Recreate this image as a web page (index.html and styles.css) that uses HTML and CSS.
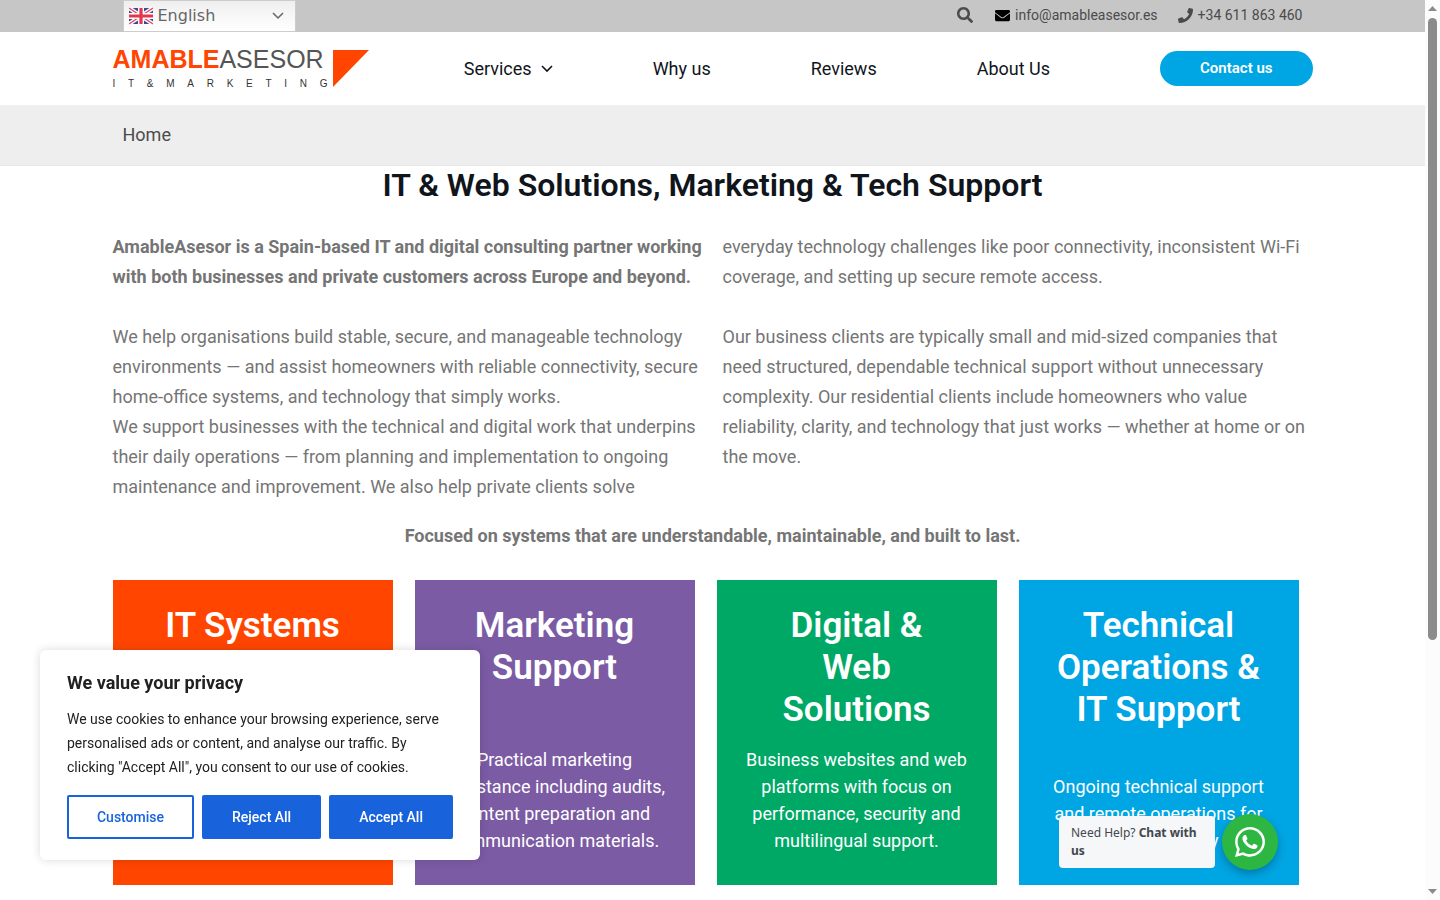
FILE: index.html
```
<!DOCTYPE html>
<html lang="en">
<head>
	<meta charset="utf-8">
	<title>AmableAsesor - IT &amp; Marketing</title>
	<link rel="stylesheet" href="styles.css">
</head>

<body>
<div class="page">

	<div class="topbar">
		<div class="container topbar-row">
			<div class="language">
				<svg class="flag" viewBox="0 0 24 18" width="24" height="18" aria-hidden="true">
					<rect y="1" width="24" height="16" fill="#3c4a93"/>
					<path d="M0 1l24 16M24 1L0 17" stroke="#fff" stroke-width="4"/>
					<path d="M0 1l24 16M24 1L0 17" stroke="#e4455c" stroke-width="1.4"/>
					<path d="M12 1v16M0 9h24" stroke="#fff" stroke-width="6"/>
					<path d="M12 1v16M0 9h24" stroke="#e4354c" stroke-width="3.2"/>
				</svg>
				<select class="language-select" aria-label="Language">
					<option>English</option>
				</select>
				<svg class="language-arrow" viewBox="0 0 12 8" width="12" height="8" aria-hidden="true"><path d="M1 1l5 5 5-5" fill="none" stroke="#666" stroke-width="1.5"/></svg>
			</div>
			<div class="contact-info">
				<button class="search" type="button" aria-label="Search">
					<svg viewBox="0 0 512 512" width="16" height="16" fill="#4b4b4b"><path d="M505 442.7L405.3 343c-4.5-4.5-10.6-7-17-7H372c27.6-35.3 44-79.7 44-128C416 93.1 322.9 0 208 0S0 93.1 0 208s93.1 208 208 208c48.3 0 92.7-16.4 128-44v16.3c0 6.4 2.5 12.5 7 17l99.7 99.7c9.4 9.4 24.6 9.4 33.9 0l28.3-28.3c9.4-9.4 9.4-24.6.1-34zM208 336c-70.7 0-128-57.2-128-128 0-70.7 57.2-128 128-128 70.7 0 128 57.2 128 128 0 70.7-57.2 128-128 128z"/></svg>
				</button>
				<a href="mailto:info@amableasesor.es">
					<svg viewBox="0 0 512 512" width="15" height="15" fill="#000"><path d="M502.3 190.8c3.9-3.1 9.7-.2 9.7 4.7V400c0 26.5-21.5 48-48 48H48c-26.5 0-48-21.5-48-48V195.600c0-5 5.700-7.800 9.700-4.700 22.400 17.400 52.100 39.500 154.100 113.600 21.100 15.400 56.700 47.800 92.200 47.600 35.700.3 72-32.800 92.300-47.600 102-74.100 131.600-96.300 154-113.700zM256 320c23.200.4 56.600-29.200 73.400-41.400 132.700-96.300 142.800-104.700 173.400-128.700 5.800-4.500 9.200-11.500 9.200-18.900v-19c0-26.500-21.500-48-48-48H48c-26.500 0-48 21.500-48 48v19c0 7.400 3.400 14.300 9.200 18.900 30.600 23.900 40.700 32.400 173.400 128.700 16.800 12.200 50.200 41.800 73.400 41.400z"/></svg>
					info@amableasesor.es
				</a>
				<a href="tel:+34611863460">
					<svg viewBox="0 0 512 512" width="15" height="15" fill="#4b4b4b"><path d="M493.4 24.6l-104-24c-11.3-2.6-22.9 3.3-27.5 13.9l-48 112c-4.2 9.8-1.4 21.3 6.9 28l60.6 49.6c-36 76.7-98.9 140.5-177.2 177.2l-49.6-60.6c-6.8-8.3-18.2-11.1-28-6.9l-112 48C3.9 366.5-2 378.1.6 389.4l24 104C27.1 504.2 36.7 512 48 512c256.1 0 464-207.5 464-464 0-11.200-7.700-20.900-18.600-23.400z"/></svg>
					+34 611 863 460
				</a>
			</div>
		</div>
	</div>

	<header class="header">
		<div class="container header-row">
			<a class="logo" href="#">
				<span class="logo-text">
					<span class="logo-name"><b>AMABLE</b>ASESOR</span>
					<span class="logo-tag"><span>I</span><span>T</span><span>&amp;</span><span>M</span><span>A</span><span>R</span><span>K</span><span>E</span><span>T</span><span>I</span><span>N</span><span>G</span></span>
				</span>
				<svg viewBox="0 0 36 37" width="36" height="37" aria-hidden="true"><path d="M0 0h36L0 37z" fill="#ff4500"/></svg>
			</a>
			<nav class="menu">
				<a href="#">Services <svg viewBox="0 0 12 8" width="12" height="8" aria-hidden="true"><path d="M1 1l5 5 5-5" fill="none" stroke="#10151c" stroke-width="1.6"/></svg></a>
				<a href="#">Why us</a>
				<a href="#">Reviews</a>
				<a href="#">About Us</a>
			</nav>
			<a class="contact-button" href="#">Contact us</a>
		</div>
	</header>

	<div class="breadcrumb">
		<div class="container"><a href="#">Home</a></div>
	</div>

	<main class="container">
		<h1>IT &amp; Web Solutions, Marketing &amp; Tech Support</h1>

		<div class="intro">
			<p><b>AmableAsesor is a Spain-based IT and digital consulting partner working with both businesses and private customers across Europe and beyond.</b></p>
			<p>We help organisations build stable, secure, and manageable technology environments — and assist homeowners with reliable connectivity, secure home-office systems, and technology that simply works.<br>
			We support businesses with the technical and digital work that underpins their daily operations — from planning and implementation to ongoing maintenance and improvement. We also help private clients solve everyday technology challenges like poor connectivity, inconsistent Wi-Fi coverage, and setting up secure remote access.</p>
			<p>Our business clients are typically small and mid-sized companies that need structured, dependable technical support without unnecessary complexity. Our residential clients include homeowners who value reliability, clarity, and technology that just works — whether at home or on the move.</p>
		</div>

		<p class="focus">Focused on systems that are understandable, maintainable, and built to last.</p>

		<div class="cards">
			<section class="card orange">
				<h2>IT Systems</h2>
			</section>
			<section class="card purple">
				<h2>Marketing Support</h2>
				<p>Practical marketing assistance including audits, content preparation and communication materials.</p>
			</section>
			<section class="card green">
				<h2>Digital &amp;<br>Web<br>Solutions</h2>
				<p>Business websites and web platforms with focus on performance, security and multilingual support.</p>
			</section>
			<section class="card blue">
				<h2>Technical Operations &amp; IT Support</h2>
				<p>Ongoing technical support and remote operations for daily continuity</p>
			</section>
		</div>
	</main>
</div>

<!-- cookie notice -->
<div class="cookies" role="dialog" aria-labelledby="cookies-title">
	<p class="cookies-title" id="cookies-title">We value your privacy</p>
	<p>We use cookies to enhance your browsing experience, serve personalised ads or content, and analyse our traffic. By clicking "Accept All", you consent to our use of cookies.</p>
	<div class="cookies-buttons">
		<button type="button" class="outline">Customise</button>
		<button type="button">Reject All</button>
		<button type="button">Accept All</button>
	</div>
</div>

<!-- chat -->
<div class="chat">
	<div class="chat-text">Need Help? <b>Chat with us</b></div>
	<a class="chat-button" href="#" aria-label="WhatsApp">
		<svg viewBox="0 32 448 448" width="30" height="30" fill="#fff"><path d="M380.9 97.1C339 55.1 283.2 32 223.9 32c-122.4 0-222 99.6-222 222 0 39.1 10.2 77.3 29.6 111L0 480l117.7-30.900c32.400 17.700 68.900 27 106.100 27h.1c122.300 0 224.100-99.600 224.100-222 0-59.300-25.200-115-67.100-157zm-157 341.600c-33.200 0-65.700-8.900-94-25.700l-6.700-4-69.800 18.300L72 359.200l-4.400-7c-18.500-29.400-28.200-63.300-28.200-98.200 0-101.700 82.800-184.500 184.600-184.500 49.300 0 95.600 19.200 130.400 54.100 34.800 34.900 56.200 81.200 56.100 130.500 0 101.800-84.900 184.600-186.600 184.600zm101.200-138.200c-5.500-2.800-32.800-16.200-37.900-18-5.100-1.900-8.800-2.800-12.500 2.800-3.700 5.600-14.300 18-17.600 21.800-3.200 3.700-6.500 4.200-12 1.400-32.600-16.300-54-29.100-75.500-66-5.700-9.800 5.700-9.100 16.300-30.300 1.800-3.700.9-6.900-.5-9.700-1.400-2.800-12.500-30.100-17.100-41.200-4.500-10.800-9.100-9.300-12.500-9.500-3.200-.2-6.900-.2-10.600-.2-3.700 0-9.700 1.400-14.800 6.900-5.100 5.600-19.400 19-19.400 46.300 0 27.300 19.900 53.700 22.600 57.400 2.800 3.700 39.100 59.700 94.800 83.800 35.200 15.200 49 16.500 66.600 13.900 10.700-1.600 32.800-13.400 37.400-26.400 4.600-13 4.600-24.100 3.200-26.400-1.300-2.500-5-3.900-10.500-6.600z"/></svg>
	</a>
</div>

<div class="scrollbar" aria-hidden="true">
	<svg viewBox="0 0 9 5" width="9" height="5"><path d="M0 5L4.500 0 9 5z" fill="#8b8b8b"/></svg>
	<div class="scroll-track"><div class="scroll-thumb"></div></div>
	<svg viewBox="0 0 9 5" width="9" height="5"><path d="M0 0h9L4.500 5z" fill="#8b8b8b"/></svg>
</div>
</body>
</html>
```

FILE: styles.css
```
* {box-sizing:border-box;}
body {margin:0; font-family:Roboto, Arial, sans-serif; font-size:18px;
	line-height:30px; color:#757575; background:#fff;}
h1, h2, p {margin:0;}
a {color:inherit; text-decoration:none;}
svg {flex:none;}
button {font-family:inherit; cursor:pointer;}

.page {padding-right:15px;}
.container {max-width:1200px; margin:0 auto;}

/* top bar */
.topbar {background:#c6c6c6; color:#4b4b4b; font-size:14px;}
.topbar-row {display:flex; justify-content:space-between; align-items:flex-start;
	height:32px; padding:0 10px;}
.language {display:flex; align-items:center; width:173px; height:32px;
	padding:0 11px 1px 5px; border:1px solid #ccc;
	background:linear-gradient(to bottom, #efefef, #fff);}
.language-select {flex:1; appearance:none; border:0; padding:0 0 0 5px;
	background:none; color:#666; font:16px "DejaVu Sans", sans-serif;}
.contact-info {display:flex; align-items:center; gap:20px;}
.contact-info a {display:flex; align-items:center; gap:5px;}
.search {display:flex; padding:0 2px 0 0; border:0; background:none;}

/* header */
.header-row {display:flex; align-items:center; height:73px;}
.logo {display:flex; gap:5px;}
.logo-text {display:flex; flex-direction:column; justify-content:space-between;
	width:215px; font-family:"Liberation Sans", Arial, sans-serif; color:#555;}
.logo-name {font-size:25px; line-height:19px;}
.logo-name b {color:#ff4500;}
.logo-tag {display:flex; justify-content:space-between; font-size:10px;
	line-height:7px; color:#333;}
.menu {display:flex; gap:100px; margin-left:auto; margin-right:110px;
	color:#10151c;}
.menu a {display:flex; align-items:center; gap:9px;}
.contact-button {padding:0 40px; border-radius:18px; background:#00a5e3;
	color:#fff; font-size:15px; font-weight:600; line-height:35px;}

.breadcrumb {padding:15px 10px; background:#eee; border-bottom:1px solid #e8e8e8;
	color:#4b4b4b;}
.breadcrumb .container {padding:0 10px;}

/* content */
h1 {font-size:32px; line-height:38px; font-weight:600; text-align:center;
	color:#10151c;}
.intro {columns:2; column-gap:20px; margin:28px 0 19px;}
.intro p {margin-bottom:30px;}
.intro p:last-child {margin-bottom:0;}
.focus {text-align:center; font-weight:bold;}
.cards {display:grid; grid-template-columns:repeat(4, 280px); gap:22px;
	margin-top:29px;}
.card {display:flex; flex-direction:column; justify-content:space-between;
	min-height:305px; padding:25px 25px 31px; text-align:center; color:#fff;}
.card h2 {font-size:35px; line-height:42px; font-weight:600;}
.card p {line-height:27px;}
.orange {background:#ff4500;}
.purple {background:#7b5ba4;}
.green {background:#00a866;}
.blue {background:#00a5e3;}

/* cookie notice */
.cookies {position:fixed; left:40px; bottom:40px; width:440px;
	padding:21px 27px; border-radius:6px; background:#fff; color:#212121;
	font-size:14px; line-height:24px; box-shadow:0 0 10px rgba(0,0,0,.15);}
.cookies-title {margin-bottom:12px; font-size:18px; font-weight:bold;}
.cookies-buttons {display:flex; gap:8px; margin-top:16px;}
.cookies button {flex:auto; height:44px; padding:0 27px; border:2px solid #1863dc;
	border-radius:2px; background:#1863dc; color:#fff; font-size:14px;
	font-weight:500; white-space:nowrap;}
.cookies .outline {background:#fff; color:#1863dc;}

/* chat */
.chat {position:fixed; right:162px; bottom:30px; display:flex;
	align-items:center; gap:7px;}
.chat-text {width:156px; padding:8px 12px; border-radius:4px;
	background:#f5f7f9; color:#43474e; font:12px/18px "Noto Sans", sans-serif;}
.chat-button {display:flex; align-items:center; justify-content:center;
	width:56px; height:56px; border-radius:50%; background:#2db742;
	box-shadow:0 4px 8px rgba(0,0,0,.25);}

.scrollbar {position:fixed; top:0; right:0; bottom:0; width:15px; padding:6px 0;
	display:flex; flex-direction:column; align-items:center; background:#fcfcfc;}
.scroll-track {flex:1; padding:7px 0;}
.scroll-thumb {width:9px; height:72%; border-radius:5px; background:#8b8b8b;}
```
